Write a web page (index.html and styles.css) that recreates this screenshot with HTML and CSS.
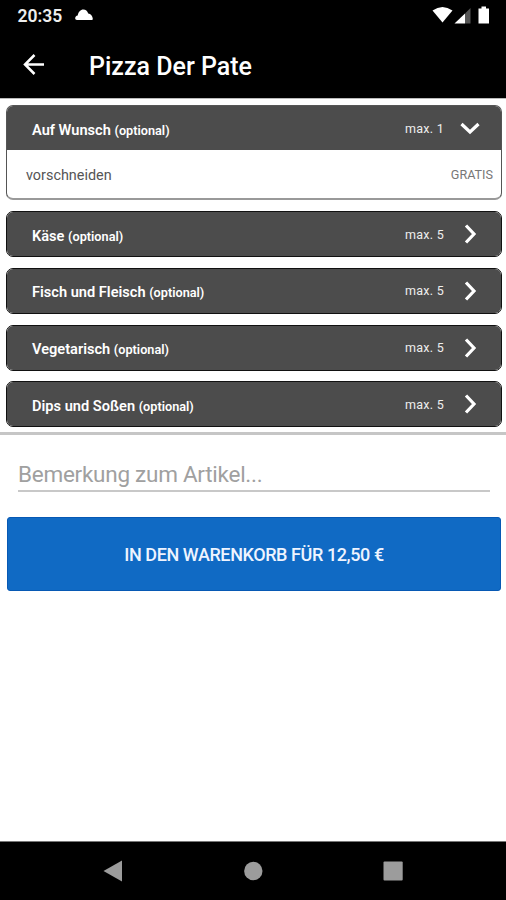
FILE: index.html
```html
<!DOCTYPE html>
<html lang="de">
<head>
<meta charset="utf-8">
<title>Pizza Der Pate</title>
<link rel="stylesheet" href="styles.css">
</head>
<body>
<header class="top">
  <div class="status">
    <span class="clock">20:35</span>
    <svg class="cloud" width="18" height="12" viewBox="0 0 18 12"><path d="M2 11C.8 11 .2 10.300.2 9.300c0-1.400.9-2.500 2.500-2.800C3.300 3 5.500.5 8.400.5c2.300 0 4 1.600 4.800 4 2.600.3 4.500 2.700 4.600 5.300 0 .8-.4 1.200-1.300 1.200z" fill="#fff"/></svg>
    <svg class="signals" width="58" height="18" viewBox="0 0 58 18"><path d="M.5 4.500Q10.500-2.500 20.500 4.500L10.500 16.500z" fill="#fff"/><path d="M22.500 17.500L33 7.500V17.500z" fill="#fff"/><path d="M33 17.500V7.500L38.500 2V17.500z" fill="#555"/><path d="M46.500 2.500h3V.5h4.500v2h3v15H46.500z" fill="#fff"/></svg>
  </div>
  <div class="bar">
    <svg class="back" width="22" height="22" viewBox="0 0 22 22"><path d="M21 10.500H2M11.500 1L2 10.500l9.500 9.500" fill="none" stroke="#fff" stroke-width="2.500"/></svg>
    <h1 class="title">Pizza Der Pate</h1>
  </div>
</header>
<main class="content">
  <section class="groups">
    <article class="card">
      <div class="head"><h2 class="name">Auf Wunsch <small>(optional)</small></h2><span class="max">max. 1</span><svg class="chev" width="20" height="20" viewBox="0 0 20 20"><path d="M1.500 6l8.500 8 8.500-8"/></svg></div>
      <div class="option"><span class="label">vorschneiden</span><span class="price">GRATIS</span></div>
    </article>
    <article class="card">
      <div class="head low"><h2 class="name">Käse <small>(optional)</small></h2><span class="max">max. 5</span><svg class="chev" width="20" height="20" viewBox="0 0 20 20"><path d="M6 1.500l8 8.500-8 8.500"/></svg></div>
    </article>
    <article class="card">
      <div class="head"><h2 class="name">Fisch und Fleisch <small>(optional)</small></h2><span class="max">max. 5</span><svg class="chev" width="20" height="20" viewBox="0 0 20 20"><path d="M6 1.500l8 8.500-8 8.500"/></svg></div>
    </article>
    <article class="card">
      <div class="head"><h2 class="name">Vegetarisch <small>(optional)</small></h2><span class="max">max. 5</span><svg class="chev" width="20" height="20" viewBox="0 0 20 20"><path d="M6 1.500l8 8.500-8 8.500"/></svg></div>
    </article>
    <article class="card">
      <div class="head"><h2 class="name">Dips und Soßen <small>(optional)</small></h2><span class="max">max. 5</span><svg class="chev" width="20" height="20" viewBox="0 0 20 20"><path d="M6 1.500l8 8.500-8 8.500"/></svg></div>
    </article>
  </section>
  <div class="note">Bemerkung zum Artikel...</div>
  <button class="cart">IN DEN WARENKORB FÜR 12,50 €</button>
</main>
<nav class="nav">
  <svg width="20" height="22" viewBox="0 0 20 22"><path d="M.5 11L19 .5v21z"/></svg>
  <svg width="20" height="20" viewBox="0 0 20 20"><circle cx="10.300" cy="10" r="9.200"/></svg>
  <svg width="20" height="20" viewBox="0 0 20 20"><rect x=".5" y=".5" width="19.200" height="19" rx="1"/></svg>
</nav>
</body>
</html>
```
FILE: styles.css
```css
* { box-sizing: border-box; }
body {
  margin: 0;
  height: 900px;
  display: flex;
  flex-direction: column;
  overflow: hidden;
  background: #fff;
  font-family: Roboto, "Liberation Sans", sans-serif;
}
h1, h2 { margin: 0; }
.top { height: 99px; background: #000; color: #fff; border-bottom: 1px solid #bbb; }
.status { height: 32px; display: flex; align-items: center; padding: 0 16px 0 17.5px; }
.clock { font-size: 17.5px; font-weight: 600; color: #eee; width: 57.5px; line-height: 32px; }
.cloud { margin-top: -2px; }
.signals { margin-left: auto; margin-top: -2px; }
.bar { height: 66px; display: flex; align-items: center; padding-left: 23px; }
.title { margin-left: 44px; font-size: 25px; font-weight: 500; line-height: 32px; padding-top: 3px; white-space: nowrap; }
.content { flex: 1; }
.groups {
  height: 336px;
  display: flex;
  flex-direction: column;
  gap: 10.8px;
  padding: 6px 4px 0 6px;
  border-bottom: 3px solid #c6c6c6;
}
.card { flex: none; border: 1px solid #111; border-radius: 7px; background: #4c4c4c; overflow: hidden; }
.card:first-child { height: 95px; margin-bottom: .2px; border-color: #555; border-bottom: 2px solid #999; background: #fff; }
.head { height: 44px; display: flex; align-items: center; padding: 0 21px 0 25px; background: #4c4c4c; color: #fff; }
.name { flex: 1; font-size: 14.6px; font-weight: 600; line-height: 20px; padding-top: 4px; white-space: nowrap; }
.name small { font-size: 12.7px; }
.max { width: 55px; font-size: 12.5px; letter-spacing: .3px; line-height: 18px; padding-top: 1px; color: #eee; }
.low .name { padding-top: 5px; }
.low .max { padding-top: 3px; }
.chev { fill: none; stroke: #fff; stroke-width: 3.2; }
.option { height: 49px; display: flex; align-items: center; justify-content: space-between; padding: 0 8px 0 19px; }
.label { font-size: 14.4px; color: #555; padding-top: 1px; }
.price { font-size: 12.6px; color: #777; }
.note {
  height: 57px;
  margin: 0 16px 0 18px;
  padding-top: 22px;
  border-bottom: 2px solid #c8c8c8;
  color: #a0a0a0;
  font-size: 22.5px;
  letter-spacing: -.26px;
  line-height: 34px;
}
.cart {
  display: block;
  width: 494px;
  height: 74px;
  margin: 25px 0 0 7px;
  padding: 2px 0 0;
  border: 1px solid #0759b4;
  border-radius: 3px;
  background: #106ac4;
  color: #eef4ff;
  font: 500 18px/24px Roboto, sans-serif;
  letter-spacing: -.41px;
}
.nav {
  height: 59px;
  display: flex;
  align-items: center;
  justify-content: space-between;
  padding: 0 103px 0 103px;
  border-top: 1px solid #777;
  background: #000;
  fill: #9c9c9c;
}
```
